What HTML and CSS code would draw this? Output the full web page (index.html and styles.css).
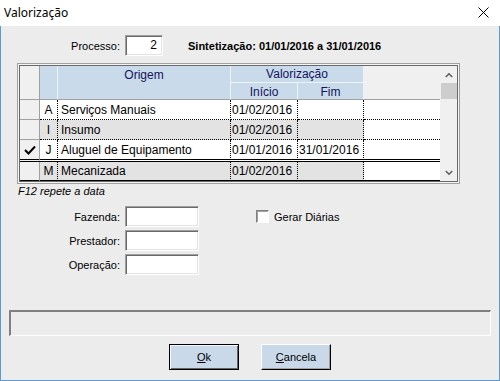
FILE: index.html
```html
<!DOCTYPE html>
<html lang="pt">
<head>
    <meta charset="UTF-8" />
    <title>Valorização</title>
    <link rel="stylesheet" href="styles.css">
</head>
<body>
    <div class="window">
        <div class="titlebar">
            <span class="title">Valorização</span>
            <svg class="close" width="11" height="11" viewBox="0 0 11 11">
                <path d="M0.5 0.5L10.5 10.5M10.5 0.5L0.5 10.5" stroke="#000" stroke-width="1" fill="none"/>
            </svg>
        </div>
        <div class="content">
            <div class="proc-row">
                <span class="lbl">Processo:</span>
                <div class="field proc-field">2</div>
                <span class="sint">Sintetização: 01/01/2016 a 31/01/2016</span>
            </div>

            <!-- grade de origens -->
            <div class="grid">
                <div class="grid-inner">
                    <div class="cells">
                        <div class="head">
                            <div class="h-ind"></div>
                            <div class="h-key"></div>
                            <div class="h-org">Origem</div>
                            <div class="h-val">Valorização</div>
                            <div class="h-ini">Início</div>
                            <div class="h-fim">Fim</div>
                            <div class="h-blank"></div>
                        </div>
                        <div class="row">
                            <div class="ind"></div>
                            <div class="key">A</div>
                            <div class="org">Serviços Manuais</div>
                            <div class="dt">01/02/2016</div>
                            <div class="dt"></div>
                            <div class="blank"></div>
                        </div>
                        <div class="row alt">
                            <div class="ind"></div>
                            <div class="key">I</div>
                            <div class="org">Insumo</div>
                            <div class="dt">01/02/2016</div>
                            <div class="dt"></div>
                            <div class="blank"></div>
                        </div>
                        <div class="row sel">
                            <div class="ind">
                                <svg width="12" height="10" viewBox="0 0 12 10">
                                    <path d="M1 5L4.5 8.5L11 1.5" stroke="#000" stroke-width="2" fill="none"/>
                                </svg>
                            </div>
                            <div class="key">J</div>
                            <div class="org">Aluguel de Equipamento</div>
                            <div class="dt">01/01/2016</div>
                            <div class="dt">31/01/2016</div>
                            <div class="blank"></div>
                        </div>
                        <div class="row alt sel last">
                            <div class="ind"></div>
                            <div class="key">M</div>
                            <div class="org">Mecanizada</div>
                            <div class="dt">01/02/2016</div>
                            <div class="dt"></div>
                            <div class="blank"></div>
                        </div>
                    </div>
                    <div class="scrollbar">
                        <div class="sb-btn">
                            <svg width="8" height="6" viewBox="0 0 8 6"><path d="M0.8 5L4 1.8L7.2 5" stroke="#606060" stroke-width="1.6" fill="none"/></svg>
                        </div>
                        <div class="sb-track"><div class="sb-thumb"></div></div>
                        <div class="sb-btn">
                            <svg width="8" height="6" viewBox="0 0 8 6"><path d="M0.8 1L4 4.2L7.2 1" stroke="#606060" stroke-width="1.6" fill="none"/></svg>
                        </div>
                    </div>
                </div>
            </div>

            <div class="hint">F12 repete a data</div>

            <div class="fields">
                <span class="lbl">Fazenda:</span>
                <div class="field"></div>
                <label class="check"><span class="box"></span>Gerar Diárias</label>
                <span class="lbl">Prestador:</span>
                <div class="field"></div>
                <span class="lbl">Operação:</span>
                <div class="field"></div>
            </div>

            <div class="status"></div>

            <div class="buttons">
                <button type="button" class="btn default"><u>O</u>k</button>
                <button type="button" class="btn"><u>C</u>ancela</button>
            </div>
        </div>
    </div>
</body>
</html>
```

FILE: styles.css
```css
/* janela */
* {
    box-sizing: border-box;
}

body {
    margin: 0;
    background: #ececec;
}

.window {
    width: 500px;
    height: 381px;
    display: flex;
    flex-direction: column;
    font-family: "Liberation Sans", Arial, sans-serif;
    font-size: 11px;
    color: #000;
}

.titlebar {
    height: 26px;
    background: #fff;
    display: flex;
    align-items: center;
    justify-content: space-between;
    padding: 0 11px 1px 4px;
}

.title {
    font-family: "Noto Sans", sans-serif;
    font-size: 12px;
}

.content {
    flex: 1;
    background: #ececec;
    border: 1px solid #5b9bd5;
    border-top: none;
    padding: 9px 8px 0;
}

/* campos */
.proc-row {
    display: flex;
    align-items: center;
    height: 21px;
}

.lbl {
    width: 111px;
    text-align: right;
    line-height: 22px;
}

.field {
    height: 21px;
    background: #fff;
    border: 1px solid;
    border-color: #a0a0a0 #fff #fff #a0a0a0;
    box-shadow: inset 1px 1px 0 #696969, inset -1px -1px 0 #e3e3e3;
}

.proc-row .field {
    width: 38px;
    margin-left: 5px;
    text-align: right;
    padding-right: 5px;
    font-size: 12px;
    line-height: 19px;
}

.sint {
    font-weight: bold;
    margin-left: 25px;
}

/* grade */
.grid {
    margin: 7px 0 0 8px;
    width: 443px;
    border: 1px solid #a0a0a0;
    padding: 1px;
    background: #f4f4f4;
}

.grid-inner {
    border: 1px solid #696969;
    height: 117px;
    display: flex;
    overflow: hidden;
}

.cells {
    flex: 1;
    background: #fff;
}

.head,
.row {
    display: grid;
    grid-template-columns: 20px 18px 173px 67px 66px 76px;
    font-size: 12px;
}

.head {
    grid-template-rows: 17px 17px;
    color: #14145c;
}

.head > div {
    background: #c9daea;
    border-right: 1px solid #eef3f8;
    border-bottom: 1px solid #a0a0a0;
    text-align: center;
    line-height: 17px;
    padding-top: 1px;
}

.head .h-ind {
    grid-row: 1 / 3;
    background: #f0f0f0;
    border-right-color: #a0a0a0;
}

.head .h-key {
    grid-row: 1 / 3;
}

.head .h-org {
    grid-row: 1 / 3;
}

.head .h-val {
    grid-column: 4 / 6;
    border-bottom-color: #eef3f8;
    line-height: 15px;
}

.head .h-blank {
    grid-row: 1 / 3;
    grid-column: 6;
    background: #f0f0f0;
    border-right: none;
}

.row {
    height: 20px;
}

.row > div {
    border-right: 1px dotted #000;
    border-bottom: 1px dotted #000;
    line-height: 19px;
    padding-top: 1px;
    white-space: nowrap;
    overflow: hidden;
    background: #fff;
}

.row .ind {
    background: #f0f0f0;
    border-right: 1px solid #a0a0a0;
    border-bottom: 1px solid #a0a0a0;
    padding-top: 0;
    display: flex;
    align-items: center;
    justify-content: center;
}

.row .key {
    text-align: center;
}

.row .org {
    padding-left: 3px;
}

.row .dt {
    padding-left: 1px;
}

.row .blank {
    border-right: none;
}

.row.alt .key,
.row.alt .org,
.row.alt .dt {
    background: #e3e3e3;
}

.row.sel {
    height: 22px;
}

.row.sel > div {
    border-bottom: 3px double #000;
}

.row.last {
    height: 21px;
}

.row.last > div {
    line-height: 17px;
}

/* barra de rolagem */
.scrollbar {
    width: 17px;
    background: #f0f0f0;
    display: flex;
    flex-direction: column;
}

.sb-btn {
    height: 17px;
    display: flex;
    align-items: center;
    justify-content: center;
}

.sb-track {
    flex: 1;
}

.sb-thumb {
    height: 16px;
    margin-left: 1px;
    background: #cdcdcd;
}

.hint {
    margin: 0 0 0 9px;
    line-height: 14px;
    font-style: italic;
}

.fields {
    margin-top: 8px;
    display: grid;
    grid-template-columns: 111px 74px 1fr;
    grid-auto-rows: 21px;
    column-gap: 5px;
    row-gap: 3px;
}

.fields .lbl {
    grid-column: 1;
}

.fields .field {
    grid-column: 2;
}

.check {
    grid-column: 3;
    margin-left: 52px;
    display: flex;
    align-items: center;
    gap: 5px;
}

.box {
    width: 13px;
    height: 13px;
    background: #fff;
    border: 1px solid;
    border-color: #808080 #fff #fff #808080;
    box-shadow: inset 1px 1px 0 #a0a0a0;
}

.status {
    margin-top: 35px;
    height: 26px;
    border-style: solid;
    border-width: 2px 1px 1px 2px;
    border-color: #808080 #fff #fff #808080;
}

.buttons {
    margin-top: 8px;
    display: flex;
    justify-content: center;
    gap: 22px;
}

.btn {
    width: 70px;
    height: 26px;
    padding: 0;
    background: #c9d9e9;
    border: 1px solid;
    border-color: #fff #000 #000 #fff;
    box-shadow: inset -1px -1px 0 #a0a0a0;
    font-family: "Liberation Sans", Arial, sans-serif;
    font-size: 11px;
    color: #000;
}

.btn.default {
    border-color: #000;
    box-shadow: inset 1px 1px 0 #f4f8fc, inset -1px -1px 0 #646464;
}
```
